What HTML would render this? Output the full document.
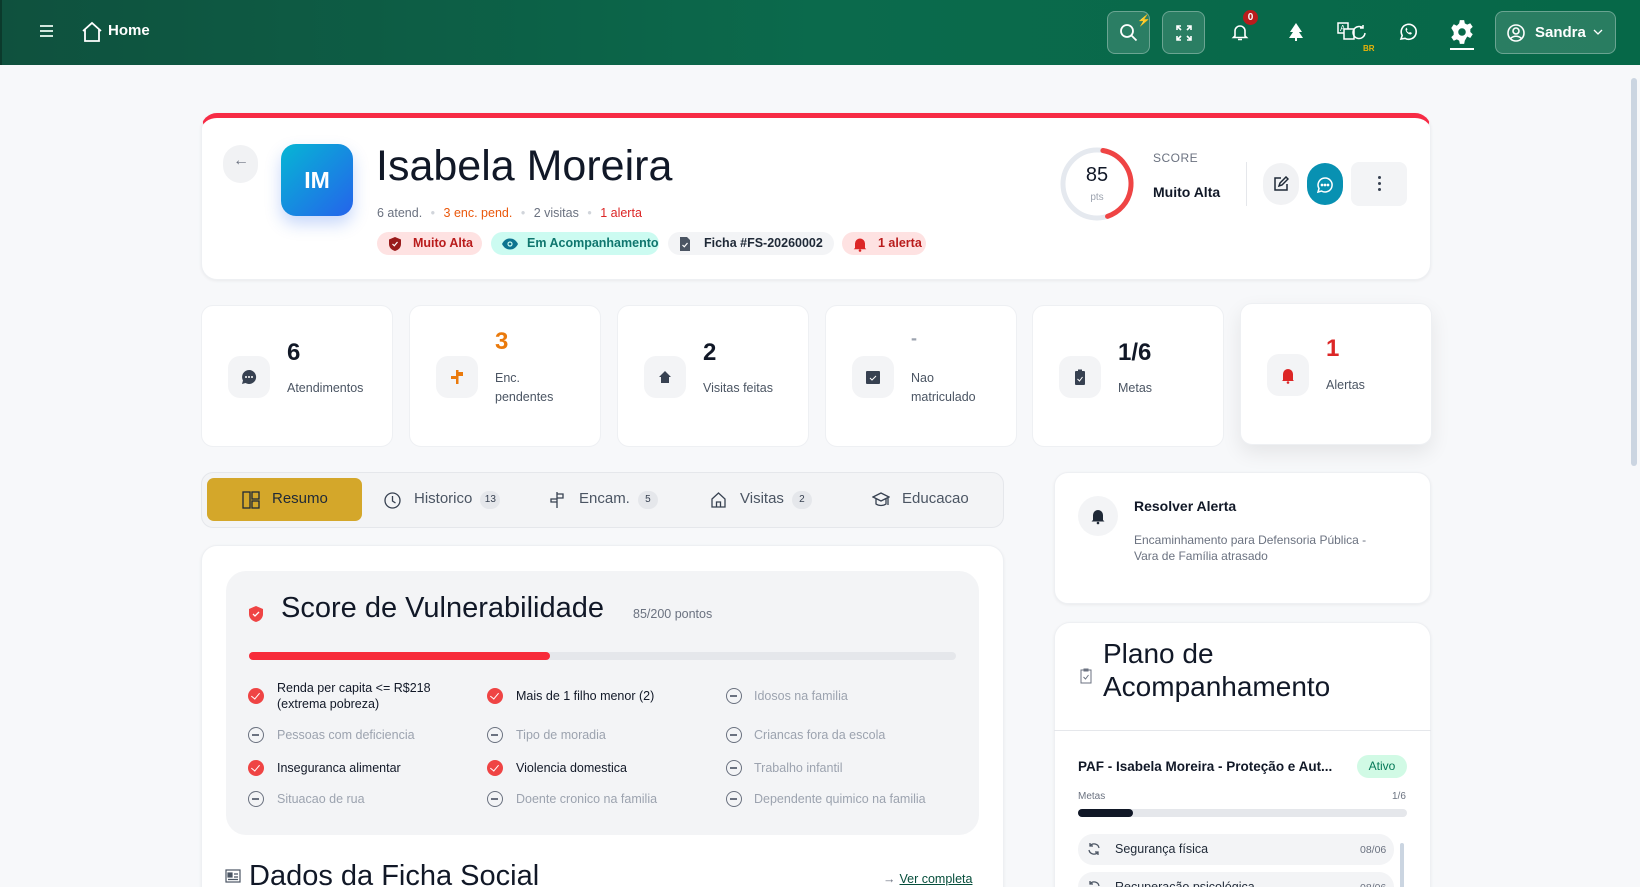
<!DOCTYPE html>
<html style="height:887px;overflow:hidden"><head><meta charset="utf-8"><style>
*{box-sizing:border-box;margin:0;padding:0}
body{width:1640px;height:887px;overflow:hidden;background:#f7f8fa;font-family:"Liberation Sans",sans-serif;color:#111827;position:relative}
.abs{position:absolute}
.hdr{left:0;top:0;width:1640px;height:65px;background:linear-gradient(90deg,#0f513e 0%,#0b6a4c 50%,#066848 100%);border-left:2px solid #0b3a2c}
.hbtn{position:absolute;top:11px;width:43px;height:43px;border-radius:8px;background:rgba(255,255,255,.14);border:1px solid rgba(255,255,255,.3)}
.card{position:absolute;background:#fff;border-radius:16px;box-shadow:0 1px 3px rgba(0,0,0,.06);border:1px solid #eef0f3}
.badge{position:absolute;top:232px;height:23px;border-radius:12px;font-size:12.5px;font-weight:bold;line-height:23px;padding-left:36px}
.badge svg{position:absolute;left:10px;top:4px}
.stat{position:absolute;top:305px;width:192px;height:142px;background:#fff;border-radius:12px;border:1px solid #eef0f3}
.ib{position:absolute;left:26px;top:50px;width:42px;height:42px;border-radius:12px;background:#f3f4f6}
.num{position:absolute;left:85px;font-size:24px;font-weight:bold}
.lbl{position:absolute;left:85px;font-size:12.5px;color:#4b5563;line-height:19px}
.tab{position:absolute;top:490px;font-size:15px;color:#4b5563}
.cnt{display:inline-block;width:20px;height:18px;border-radius:9px;background:#e5e7eb;font-size:10px;text-align:center;line-height:18px;color:#374151;margin-left:8px;vertical-align:1px}
.it{position:absolute;font-size:12.5px;line-height:16px}
.ok{color:#111827}.no{color:#9ca3af}
.ci{position:absolute;width:16px;height:16px;border-radius:50%}
.cr{background:#ef4444}
.cr:after{content:"";position:absolute;left:5px;top:3px;width:4px;height:7px;border:solid #fff;border-width:0 1.6px 1.6px 0;transform:rotate(40deg)}
.cg{border:1.5px solid #6b7280}
.cg:after{content:"";position:absolute;left:3px;top:6px;width:7px;height:1.5px;background:#6b7280}
</style></head><body>
<div class="abs hdr"></div>
<div class="abs" style="left:40px;top:25px;width:13px;height:2px;background:#d1e7dd;box-shadow:0 5px 0 #d1e7dd,0 10px 0 #d1e7dd"></div>
<svg class="abs" style="left:80px;top:20px" width="24" height="24" viewBox="0 0 24 24" fill="none" stroke="#fff" stroke-width="1.8"><path d="M3 11 12 3l9 8M5 9v12h14V9"/></svg>
<div class="abs" style="left:108px;top:22px;color:#fff;font-size:15px;font-weight:bold">Home</div>
<div class="hbtn" style="left:1107px"></div>
<svg class="abs" style="left:1119px;top:23px" width="20" height="20" viewBox="0 0 20 20" fill="none" stroke="#fff" stroke-width="1.8"><circle cx="8" cy="8" r="6"/><path d="m12.5 12.5 5 5"/></svg>
<div class="abs" style="left:1137px;top:14px;color:#eab308;font-size:11px">⚡</div>
<div class="hbtn" style="left:1162px"></div>
<svg class="abs" style="left:1175px;top:24px" width="18" height="18" viewBox="0 0 18 18" fill="none" stroke="#fff" stroke-width="1.6"><path d="M2 6V2h4M12 2h4v4M16 12v4h-4M6 16H2v-4M2 2l4 4M16 2l-4 4M16 16l-4-4M2 16l4-4"/></svg>
<svg class="abs" style="left:1230px;top:22px" width="20" height="20" viewBox="0 0 20 20" fill="none" stroke="#fff" stroke-width="1.6"><path d="M5 14V9a5 5 0 0 1 10 0v5l1.5 1.5h-13zM8 17.5h4"/></svg>
<div class="abs" style="left:1243px;top:10px;width:15px;height:15px;border-radius:50%;background:#b91c1c;color:#fff;font-size:10px;font-weight:bold;text-align:center;line-height:15px">0</div>
<svg class="abs" style="left:1287px;top:22px" width="18" height="20" viewBox="0 0 18 20" fill="#fff"><path d="M9 1 3 10h3l-4 6h14l-4-6h3z"/><rect x="8" y="16" width="2" height="3"/></svg>
<svg class="abs" style="left:1336px;top:21px" width="32" height="22" viewBox="0 0 32 22" fill="none" stroke="#fff" stroke-width="1.5"><rect x="2" y="2" width="10" height="10"/><text x="4" y="10" font-size="8" fill="#fff" stroke="none" font-family="Liberation Sans">A</text><rect x="8" y="8" width="10" height="10" fill="#0b6a4c"/><path d="M29 12a6 6 0 1 1-2-5M27 4v3h-3"/></svg>
<div class="abs" style="left:1363px;top:44px;color:#eab308;font-size:8px;font-weight:bold">BR</div>
<svg class="abs" style="left:1398px;top:22px" width="20" height="20" viewBox="0 0 20 20" fill="none" stroke="#fff" stroke-width="1.6"><path d="M3 17l1.2-3.5A7.5 7.5 0 1 1 7 16.3z"/><path d="M7.5 7c0 3 2.5 5.5 5.5 5.5l1-1.5-2-1-1 .8c-1-.5-1.8-1.3-2.3-2.3l.8-1-1-2z" fill="#fff" stroke="none"/></svg>
<svg class="abs" style="left:1449px;top:19px" width="26" height="26" viewBox="0 0 24 24" fill="#fff"><path d="M10 1h4l.6 3 2.2 1.2 2.8-1.3 2.3 3.4-2.2 2.1v2.6l2.2 2.1-2.3 3.4-2.8-1.3L14.6 20l-.6 3h-4l-.6-3-2.2-1.2-2.8 1.3-2.3-3.4 2.2-2.1v-2.6L2.1 8.3l2.3-3.4 2.8 1.3L9.4 4z"/><circle cx="12" cy="12" r="3.5" fill="#0a6a4b"/></svg>
<div class="abs" style="left:1450px;top:48px;width:24px;height:2px;background:#fff"></div>
<div class="hbtn" style="left:1495px;width:121px"></div>
<svg class="abs" style="left:1506px;top:23px" width="20" height="20" viewBox="0 0 20 20" fill="none" stroke="#fff" stroke-width="1.6"><circle cx="10" cy="10" r="8"/><circle cx="10" cy="8" r="3"/><path d="M4.5 15.5c3-3 8-3 11 0"/></svg>
<div class="abs" style="left:1535px;top:24px;color:#fff;font-size:15px;font-weight:bold">Sandra</div>
<svg class="abs" style="left:1592px;top:28px" width="12" height="8" viewBox="0 0 12 8" fill="none" stroke="#fff" stroke-width="1.3"><path d="m2 2 4 4 4-4"/></svg>
<div class="abs" style="left:1631px;top:78px;width:6px;height:388px;border-radius:3px;background:#cbd5e1"></div>

<!-- profile -->
<div class="card" style="left:201px;top:113px;width:1230px;height:167px;border-top:5px solid #f72b45"></div>
<div class="abs" style="left:223px;top:145px;width:35px;height:38px;border-radius:18px;background:#f1f2f4"></div>
<div class="abs" style="left:233px;top:152px;color:#6b7280;font-size:16px">←</div>
<div class="abs" style="left:281px;top:144px;width:72px;height:72px;border-radius:15px;background:linear-gradient(135deg,#06b6d4,#2563eb);box-shadow:0 8px 16px rgba(37,99,235,.25);color:#fff;font-size:23px;font-weight:bold;text-align:center;line-height:72px">IM</div>
<div class="abs" style="left:376px;top:142px;font-size:43px;color:#111827">Isabela Moreira</div>
<div class="abs" style="left:377px;top:206px;font-size:12.5px;color:#6b7280">6 atend. <span style="color:#d1d5db;margin:0 5px">•</span> <span style="color:#ea580c">3 enc. pend.</span> <span style="color:#d1d5db;margin:0 5px">•</span> 2 visitas <span style="color:#d1d5db;margin:0 5px">•</span> <span style="color:#dc2626">1 alerta</span></div>
<div class="badge" style="left:377px;width:105px;background:#fee2e2;color:#b91c1c"><svg width="16" height="16" viewBox="0 0 16 16"><path d="M8 1 2 3.5v4.5c0 3.5 2.6 6 6 7 3.4-1 6-3.5 6-7V3.5z" fill="#991b1b"/><path d="m5.5 8 1.8 1.8L10.5 6" stroke="#fff" fill="none" stroke-width="1.2"/></svg>Muito Alta</div>
<div class="badge" style="left:491px;width:168px;background:#ccfbf1;color:#0f766e"><svg width="18" height="16" viewBox="0 0 18 16"><path d="M1 8c2-4 5-5.5 8-5.5S15 4 17 8c-2 4-5 5.5-8 5.5S3 12 1 8z" fill="#0e7490"/><circle cx="9" cy="8" r="2.6" fill="#ccfbf1"/><circle cx="9" cy="8" r="1.4" fill="#0e7490"/></svg>Em Acompanhamento</div>
<div class="badge" style="left:668px;width:166px;background:#f3f4f6;color:#1f2937"><svg width="14" height="16" viewBox="0 0 14 16"><path d="M2 1h7l3 3v11H2z" fill="#4b5563"/><path d="m4.5 9 1.8 1.8L9.5 7" stroke="#fff" fill="none" stroke-width="1.2"/></svg>Ficha #FS-20260002</div>
<div class="badge" style="left:842px;width:84px;background:#fee2e2;color:#b91c1c"><svg width="16" height="16" viewBox="0 0 16 16" fill="#dc2626"><path d="M3 12V7.5a5 5 0 0 1 10 0V12l1.3 1.3H1.7z"/><circle cx="8" cy="14.5" r="1.3"/></svg>1 alerta</div>
<svg class="abs" style="left:1058px;top:145px" width="78" height="78" viewBox="0 0 78 78"><circle cx="39" cy="39" r="34" fill="none" stroke="#e5e9ef" stroke-width="5"/><circle cx="39" cy="39" r="34" fill="none" stroke="#ef4444" stroke-width="5" stroke-linecap="round" stroke-dasharray="90 300" transform="rotate(-80 39 39)"/></svg>
<div class="abs" style="left:1058px;top:164px;width:78px;text-align:center;font-size:20px">85</div>
<div class="abs" style="left:1058px;top:192px;width:78px;text-align:center;font-size:10px;color:#9ca3af">pts</div>
<div class="abs" style="left:1153px;top:151px;font-size:12px;color:#6b7280;letter-spacing:.5px">SCORE</div>
<div class="abs" style="left:1153px;top:184px;font-size:14px;font-weight:bold">Muito Alta</div>
<div class="abs" style="left:1246px;top:162px;width:1px;height:44px;background:#e5e7eb"></div>
<div class="abs" style="left:1263px;top:163px;width:36px;height:42px;border-radius:18px;background:#f1f2f4"></div>
<svg class="abs" style="left:1273px;top:176px" width="16" height="16" viewBox="0 0 16 16" fill="none" stroke="#1f2937" stroke-width="1.5"><path d="M8 2H2v12h12V8M6 10l1-3 6-6 2 2-6 6z"/></svg>
<div class="abs" style="left:1307px;top:163px;width:36px;height:42px;border-radius:18px;background:#0891b2"></div>
<svg class="abs" style="left:1316px;top:176px" width="18" height="18" viewBox="0 0 18 18" fill="none" stroke="#fff" stroke-width="1.5"><path d="M9 2a7 7 0 1 1-3.5 13L2 16l1-3.5A7 7 0 0 1 9 2z"/><circle cx="6" cy="9" r=".6" fill="#fff"/><circle cx="9" cy="9" r=".6" fill="#fff"/><circle cx="12" cy="9" r=".6" fill="#fff"/></svg>
<div class="abs" style="left:1351px;top:162px;width:56px;height:44px;border-radius:8px;background:#f3f4f6"></div>
<div class="abs" style="left:1378px;top:176px;width:3px;height:3px;border-radius:50%;background:#374151;box-shadow:0 6px 0 #374151,0 12px 0 #374151"></div>

<!-- stats -->
<div class="stat" style="left:201px"><div class="ib"><svg style="margin:12px" width="18" height="18" viewBox="0 0 18 18"><path d="M9 2a7 7 0 1 1-3.5 13L2 16l1-3.5A7 7 0 0 1 9 2z" fill="#374151"/><circle cx="6" cy="9" r="1" fill="#fff"/><circle cx="9" cy="9" r="1" fill="#fff"/><circle cx="12" cy="9" r="1" fill="#fff"/></svg></div><div class="num" style="top:33px">6</div><div class="lbl" style="top:73px">Atendimentos</div></div>
<div class="stat" style="left:409px"><div class="ib"><svg style="margin:12px" width="18" height="18" viewBox="0 0 18 18" fill="#ea7a0c"><rect x="8" y="2" width="2.5" height="14"/><rect x="10" y="4" width="5" height="4"/><rect x="3" y="8" width="5" height="3"/></svg></div><div class="num" style="top:22px;color:#ea7a0c">3</div><div class="lbl" style="top:63px">Enc.<br>pendentes</div></div>
<div class="stat" style="left:617px"><div class="ib"><svg style="margin:12px" width="18" height="18" viewBox="0 0 18 18" fill="#374151"><path d="M9 3 3 9h2v6h8V9h2z"/></svg></div><div class="num" style="top:33px">2</div><div class="lbl" style="top:73px">Visitas feitas</div></div>
<div class="stat" style="left:825px"><div class="ib"><svg style="margin:12px" width="18" height="18" viewBox="0 0 18 18"><rect x="2" y="3" width="14" height="13" rx="1" fill="#374151"/><path d="m6 10 2 2 4-4" stroke="#fff" fill="none"/></svg></div><div class="num" style="top:22px;color:#9ca3af;font-size:18px">-</div><div class="lbl" style="top:63px">Nao<br>matriculado</div></div>
<div class="stat" style="left:1032px"><div class="ib"><svg style="margin:12px" width="18" height="18" viewBox="0 0 18 18"><rect x="4" y="3" width="10" height="14" rx="1" fill="#374151"/><rect x="7" y="1.5" width="4" height="3" fill="#374151"/><path d="m6.5 11 2 2 3-4" stroke="#fff" fill="none"/></svg></div><div class="num" style="top:33px">1/6</div><div class="lbl" style="top:73px">Metas</div></div>
<div class="stat" style="left:1240px;top:303px;box-shadow:0 8px 20px rgba(0,0,0,.08)"><div class="ib"><svg style="margin:12px" width="18" height="18" viewBox="0 0 18 18" fill="#dc2626"><path d="M4 14V8a5 5 0 0 1 10 0v6l1 1H3z"/><circle cx="9" cy="16.5" r="1.3"/></svg></div><div class="num" style="top:31px;color:#dc2626">1</div><div class="lbl" style="top:72px">Alertas</div></div>

<!-- tabs -->
<div class="abs" style="left:201px;top:472px;width:803px;height:56px;border-radius:12px;background:#f3f4f6;border:1px solid #e5e7eb"></div>
<div class="abs" style="left:207px;top:478px;width:155px;height:43px;border-radius:7px;background:#d4a72a"></div>
<svg class="abs" style="left:242px;top:491px" width="18" height="18" viewBox="0 0 18 18" fill="none" stroke="#1f2937" stroke-width="1.3"><rect x="1" y="1" width="7" height="16"/><rect x="10" y="1" width="7" height="7"/><rect x="10" y="10" width="7" height="7"/></svg>
<div class="tab" style="left:272px;color:#1f2937">Resumo</div>
<svg class="abs" style="left:384px;top:492px" width="17" height="17" viewBox="0 0 17 17" fill="none" stroke="#374151" stroke-width="1.3"><circle cx="8.5" cy="8.5" r="7.5"/><path d="M8.5 4v5l3 2"/></svg>
<div class="tab" style="left:414px">Historico<span class="cnt">13</span></div>
<svg class="abs" style="left:549px;top:491px" width="16" height="18" viewBox="0 0 16 18" fill="none" stroke="#374151" stroke-width="1.3"><path d="M8 1v16M8 3h6v4H8M8 8H2v3h6"/></svg>
<div class="tab" style="left:579px">Encam.<span class="cnt">5</span></div>
<svg class="abs" style="left:710px;top:491px" width="17" height="17" viewBox="0 0 17 17" fill="none" stroke="#374151" stroke-width="1.3"><path d="M2 8 8.5 2 15 8v8H2zM6.5 16v-5h4v5"/></svg>
<div class="tab" style="left:740px">Visitas<span class="cnt">2</span></div>
<svg class="abs" style="left:872px;top:491px" width="18" height="18" viewBox="0 0 18 18" fill="none" stroke="#374151" stroke-width="1.3"><path d="M1 6 9 2l8 4-8 4zM4 8v5c3 2 7 2 10 0V8M16 7v7"/></svg>
<div class="tab" style="left:902px">Educacao</div>

<!-- main card -->
<div class="card" style="left:201px;top:545px;width:803px;height:360px;border-bottom:none;border-radius:16px 16px 0 0"></div>
<div class="abs" style="left:226px;top:571px;width:753px;height:264px;border-radius:20px;background:#f3f4f6"></div>
<svg class="abs" style="left:248px;top:605px" width="16" height="18" viewBox="0 0 16 18"><path d="M8 1 1 4v5c0 4 3 7 7 8 4-1 7-4 7-8V4z" fill="#ef4444"/><path d="m5 9 2 2 4-4" stroke="#fff" fill="none" stroke-width="1.3"/></svg>
<div class="abs" style="left:281px;top:592px;font-size:29px">Score de Vulnerabilidade</div>
<div class="abs" style="left:633px;top:607px;font-size:12.5px;color:#6b7280">85/200 pontos</div>
<div class="abs" style="left:249px;top:652px;width:707px;height:8px;border-radius:4px;background:#e5e7eb"></div>
<div class="abs" style="left:249px;top:652px;width:301px;height:8px;border-radius:4px;background:#f72b3a"></div>

<div class="ci cr" style="left:248px;top:688px"></div><div class="it ok" style="left:277px;top:680px">Renda per capita &lt;= R$218<br>(extrema pobreza)</div>
<div class="ci cr" style="left:487px;top:688px"></div><div class="it ok" style="left:516px;top:688px">Mais de 1 filho menor (2)</div>
<div class="ci cg" style="left:726px;top:688px"></div><div class="it no" style="left:754px;top:688px">Idosos na familia</div>
<div class="ci cg" style="left:248px;top:727px"></div><div class="it no" style="left:277px;top:727px">Pessoas com deficiencia</div>
<div class="ci cg" style="left:487px;top:727px"></div><div class="it no" style="left:516px;top:727px">Tipo de moradia</div>
<div class="ci cg" style="left:726px;top:727px"></div><div class="it no" style="left:754px;top:727px">Criancas fora da escola</div>
<div class="ci cr" style="left:248px;top:760px"></div><div class="it ok" style="left:277px;top:760px">Inseguranca alimentar</div>
<div class="ci cr" style="left:487px;top:760px"></div><div class="it ok" style="left:516px;top:760px">Violencia domestica</div>
<div class="ci cg" style="left:726px;top:760px"></div><div class="it no" style="left:754px;top:760px">Trabalho infantil</div>
<div class="ci cg" style="left:248px;top:791px"></div><div class="it no" style="left:277px;top:791px">Situacao de rua</div>
<div class="ci cg" style="left:487px;top:791px"></div><div class="it no" style="left:516px;top:791px">Doente cronico na familia</div>
<div class="ci cg" style="left:726px;top:791px"></div><div class="it no" style="left:754px;top:791px">Dependente quimico na familia</div>

<svg class="abs" style="left:225px;top:869px" width="16" height="14" viewBox="0 0 16 14" fill="none" stroke="#4b5563" stroke-width="1.2"><rect x="1" y="1" width="14" height="12"/><rect x="3" y="4" width="4" height="4" fill="#4b5563"/><path d="M9 5h4M9 8h4M3 10.5h10"/></svg>
<div class="abs" style="left:249px;top:860px;font-size:29px">Dados da Ficha Social</div>
<div class="abs" style="left:883px;top:872px;font-size:12.5px;color:#064e3b"><span style="color:#6b7280;margin-right:4px">→</span><span style="text-decoration:underline">Ver completa</span></div>

<!-- right -->
<div class="card" style="left:1054px;top:472px;width:377px;height:132px;border-radius:14px"></div>
<div class="abs" style="left:1078px;top:496px;width:40px;height:40px;border-radius:50%;background:#f3f4f6"></div>
<svg class="abs" style="left:1090px;top:507px" width="16" height="18" viewBox="0 0 16 18" fill="#1f2937"><path d="M3 13V8a5 5 0 0 1 10 0v5l1.5 1.5h-13z"/><circle cx="8" cy="16" r="1.3"/></svg>
<div class="abs" style="left:1134px;top:498px;font-size:14px;font-weight:bold">Resolver Alerta</div>
<div class="abs" style="left:1134px;top:532px;font-size:12px;color:#6b7280;line-height:16px">Encaminhamento para Defensoria Pública -<br>Vara de Família atrasado</div>

<div class="card" style="left:1054px;top:622px;width:377px;height:300px;border-bottom:none;border-radius:16px 16px 0 0"></div>
<svg class="abs" style="left:1080px;top:668px" width="12" height="16" viewBox="0 0 12 16" fill="none" stroke="#6b7280" stroke-width="1"><rect x="1" y="2" width="10" height="13"/><rect x="4" y="1" width="4" height="2"/><path d="m3.5 9 2 2 3-4"/></svg>
<div class="abs" style="left:1103px;top:637px;font-size:28px;line-height:33px">Plano de<br>Acompanhamento</div>
<div class="abs" style="left:1054px;top:730px;width:377px;height:1px;background:#e5e7eb"></div>
<div class="abs" style="left:1078px;top:759px;font-size:13.5px;font-weight:bold;color:#111827">PAF - Isabela Moreira - Proteção e Aut...</div>
<div class="abs" style="left:1357px;top:755px;width:50px;height:23px;border-radius:12px;background:#d1fae5;color:#047857;font-size:12px;text-align:center;line-height:23px">Ativo</div>
<div class="abs" style="left:1078px;top:791px;font-size:10px;color:#6b7280">Metas</div>
<div class="abs" style="left:1392px;top:791px;font-size:10px;color:#6b7280">1/6</div>
<div class="abs" style="left:1078px;top:809px;width:329px;height:8px;border-radius:4px;background:#e5e7eb"></div>
<div class="abs" style="left:1078px;top:809px;width:55px;height:8px;border-radius:4px;background:#111827"></div>
<div class="abs" style="left:1078px;top:834px;width:316px;height:31px;border-radius:15px;background:#f3f4f6"></div>
<svg class="abs" style="left:1087px;top:842px" width="14" height="14" viewBox="0 0 14 14" fill="none" stroke="#4b5563" stroke-width="1.3"><path d="M12 6A5 5 0 0 0 3 4M2 8a5 5 0 0 0 9 2M3 1v3h3M11 13v-3H8"/></svg>
<div class="abs" style="left:1115px;top:842px;font-size:12.5px;color:#1f2937">Segurança física</div>
<div class="abs" style="left:1360px;top:844px;font-size:10.5px;color:#6b7280">08/06</div>
<div class="abs" style="left:1078px;top:872px;width:316px;height:31px;border-radius:15px;background:#f3f4f6"></div>
<svg class="abs" style="left:1087px;top:880px" width="14" height="14" viewBox="0 0 14 14" fill="none" stroke="#4b5563" stroke-width="1.3"><path d="M12 6A5 5 0 0 0 3 4M2 8a5 5 0 0 0 9 2M3 1v3h3M11 13v-3H8"/></svg>
<div class="abs" style="left:1115px;top:880px;font-size:12.5px;color:#1f2937">Recuperação psicológica</div>
<div class="abs" style="left:1360px;top:882px;font-size:10.5px;color:#6b7280">08/06</div>
<div class="abs" style="left:1400px;top:843px;width:4px;height:50px;border-radius:2px;background:#cbd5e1"></div>
</body></html>
